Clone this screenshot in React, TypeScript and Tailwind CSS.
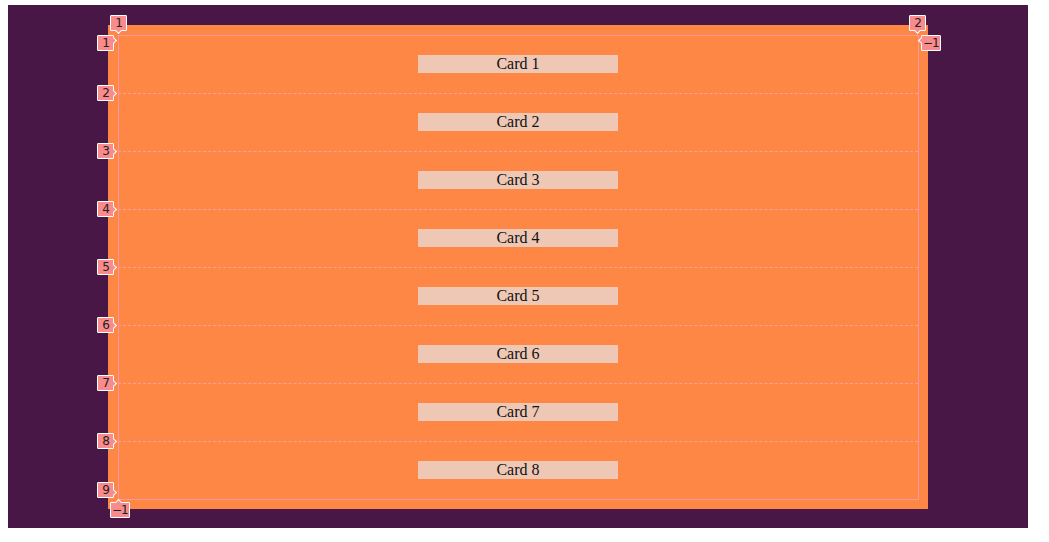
const cards = ['Card 1', 'Card 2', 'Card 3', 'Card 4', 'Card 5', 'Card 6', 'Card 7', 'Card 8'];

function Badge({ label, className, arrow }: { label: string; className: string; arrow: string }) {
  return (
    <div
      className={`absolute h-[16px] min-w-[17px] px-0 flex items-center justify-center bg-[#f88b8b] border border-white rounded-[1px] text-[12px] leading-none tracking-[-1px] text-[#222] font-['DejaVu_Sans',sans-serif] ${className}`}
    >
      <span className={`absolute w-[5px] h-[5px] bg-[#f88b8b] border-white rotate-45 ${arrow}`} />
      <span className="relative">{label}</span>
    </div>
  );
}

export default function App() {
  return (
    <div className="min-h-screen bg-white pt-[5px] pl-[8px]">
      <div className="w-[1020px] h-[523px] bg-[#491745] px-[100px] pt-[20px]">
        <div className="relative w-[820px] h-[484px] bg-[#ff8746] p-[10px]">
          <div className="grid grid-rows-8 h-[464px]">
            {cards.map((c, i) => (
              <div key={c} className="relative flex items-center justify-center">
                {i > 0 && (
                  <>
                    <span className="absolute inset-x-0 top-0 border-t border-dashed border-[#f7a0a0]" />
                    <Badge label={String(i + 1)} className="left-[-21px] top-[-8px]" arrow="right-[-3px] top-[5px] border-t border-r" />
                  </>
                )}
                <div className="w-[200px] h-[18px] bg-[#eec8b5] text-center text-[16px] leading-[18px] text-[#111] font-['Liberation_Serif',serif]">
                  {c}
                </div>
              </div>
            ))}
          </div>

          {/* grid overlay: outline and corner labels */}
          <div className="absolute inset-[10px] right-[9px] bottom-[9px] border border-[#f79a9e] pointer-events-none" />
          <Badge label="1" className="left-[2px] top-[-10px]" arrow="left-[5px] bottom-[-3px] border-r border-b" />
          <Badge label="2" className="left-[801px] top-[-10px]" arrow="left-[5px] bottom-[-3px] border-r border-b" />
          <Badge label="1" className="left-[-11px] top-[10px]" arrow="right-[-3px] top-[2px] border-t border-r" />
          <Badge label="−1" className="left-[813px] top-[10px] px-[1px]" arrow="left-[-3px] top-[2px] border-b border-l" />
          <Badge label="9" className="left-[-11px] top-[457px]" arrow="right-[-3px] bottom-[2px] border-t border-r" />
          <Badge label="−1" className="left-[2px] top-[477px] px-[1px]" arrow="left-[5px] top-[-3px] border-l border-t" />
        </div>
      </div>
    </div>
  );
}
